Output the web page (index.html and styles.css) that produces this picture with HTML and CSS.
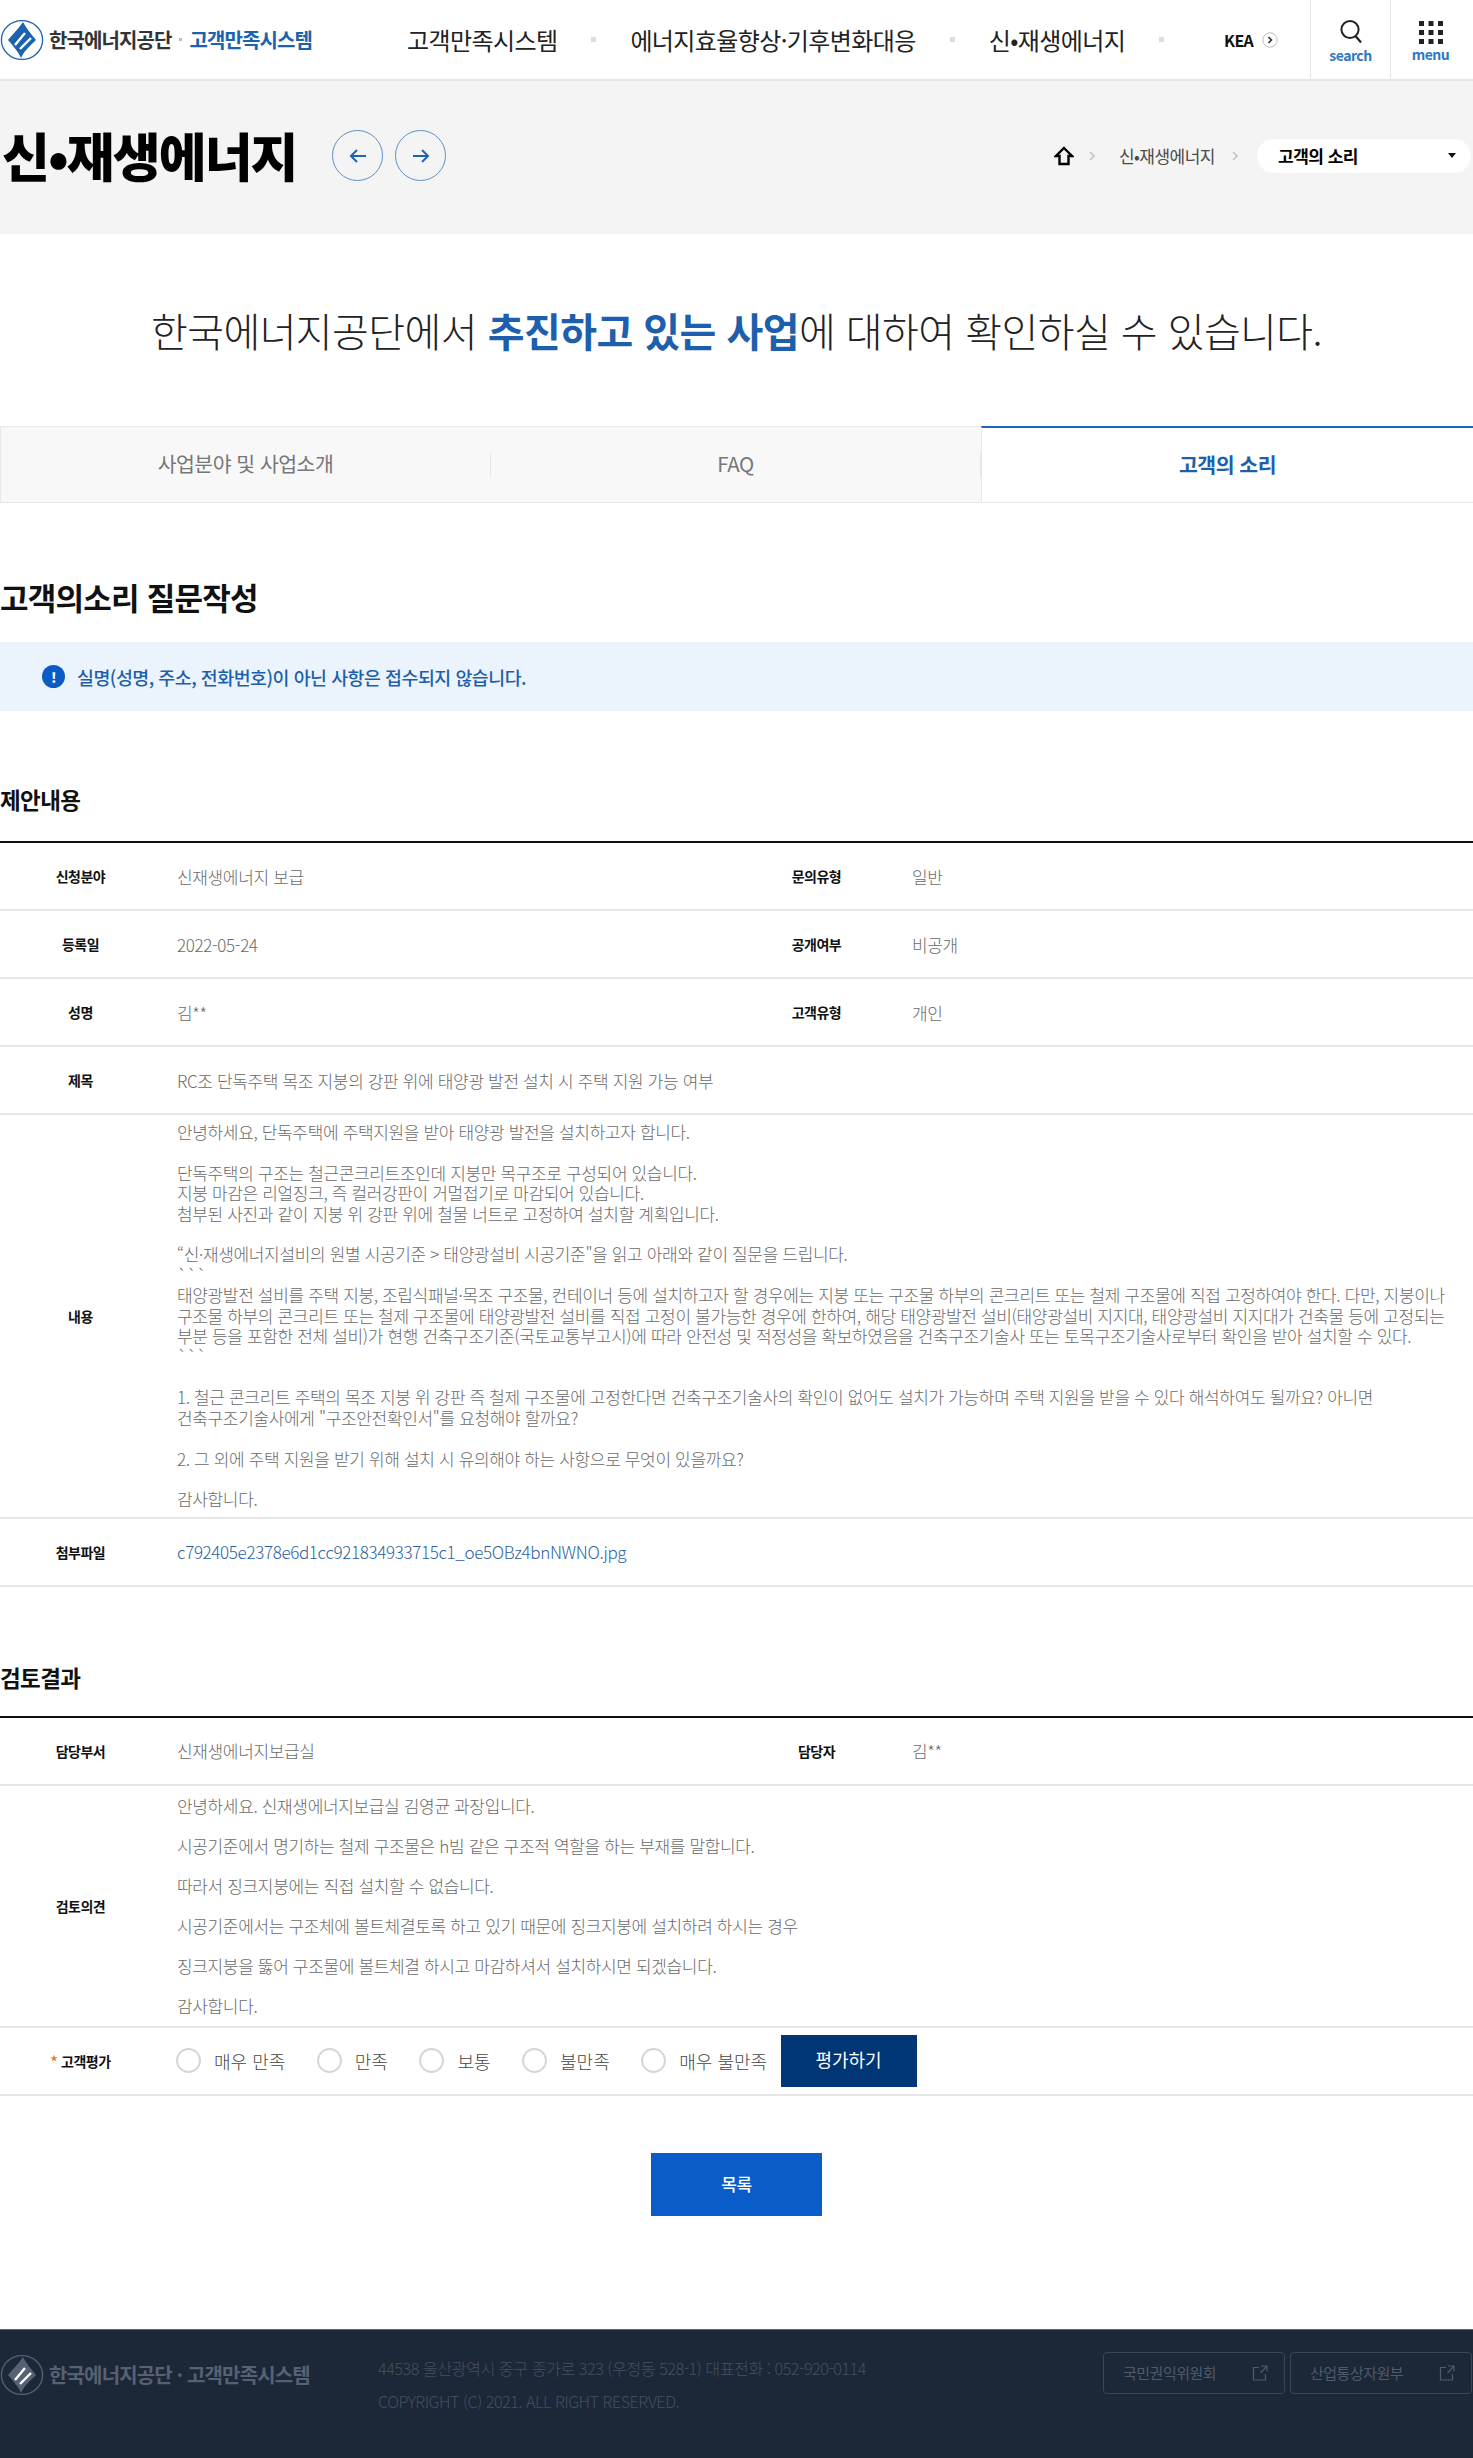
FILE: index.html
```html
<!DOCTYPE html>
<html lang="ko">
<head>
<meta charset="utf-8">
<title>고객의 소리</title>
<link rel="stylesheet" href="styles.css">
</head>
<body>
<svg class="defs" width="0" height="0" aria-hidden="true">
  <symbol id="mark" viewBox="0 0 44 42">
    <ellipse cx="22" cy="21" rx="20.6" ry="19.4" fill="none" stroke="currentColor" stroke-width="1.3"/>
    <path d="M23 3 C26 9 31 15 36 21 C30 27 24 32 21 39 C18 32 13 27 8 21 C13 15 19 9 23 3 Z" fill="currentColor"/>
    <path d="M15 26 L25 14 M20 30 L31 19" fill="none" stroke="#fff" stroke-width="2.4" class="mark-lines"/>
  </symbol>
</svg>
<header class="top">
  <a class="logo">
    <svg class="logo-mark" width="44" height="42"><use href="#mark"/></svg>
    <span class="logo-a">한국에너지공단</span><i class="logo-dot"></i><span class="logo-b">고객만족시스템</span>
  </a>
  <nav class="gnb">
    <a>고객만족시스템</a><i></i>
    <a>에너지효율향상·기후변화대응</a><i></i>
    <a>신•재생에너지</a><i></i>
  </nav>
  <a class="kea">KEA
    <svg width="16" height="16" viewBox="0 0 16 16"><circle cx="8" cy="8" r="7.2" fill="none" stroke="#bbb"/><path d="M6.5 5 L9.5 8 L6.5 11" fill="none" stroke="#222" stroke-width="1.5"/></svg>
  </a>
  <a class="tool">
    <svg width="24" height="26" viewBox="0 0 24 26"><circle cx="11" cy="10.5" r="8.6" fill="none" stroke="#222" stroke-width="2"/><path d="M16.5 17 L22 23.5" stroke="#222" stroke-width="2.2"/></svg>
    <span>search</span>
  </a>
  <a class="tool">
    <svg width="24" height="24" viewBox="0 0 24 24" fill="#222"><rect x="0" y="1" width="5" height="5"/><rect x="9.5" y="1" width="5" height="5"/><rect x="19" y="1" width="5" height="5"/><rect x="0" y="10" width="5" height="5"/><rect x="9.5" y="10" width="5" height="5"/><rect x="19" y="10" width="5" height="5"/><rect x="0" y="19" width="5" height="5"/><rect x="9.5" y="19" width="5" height="5"/><rect x="19" y="19" width="5" height="5"/></svg>
    <span>menu</span>
  </a>
</header>

<section class="band">
  <h1>신•재생에너지</h1>
  <a class="circle"><svg width="18" height="16" viewBox="0 0 18 16"><path d="M17 8 H2 M8 2 L2 8 L8 14" fill="none" stroke="#1d64b8" stroke-width="2"/></svg></a>
  <a class="circle"><svg width="18" height="16" viewBox="0 0 18 16"><path d="M1 8 H16 M10 2 L16 8 L10 14" fill="none" stroke="#1d64b8" stroke-width="2"/></svg></a>
  <div class="crumbs">
    <svg class="home" width="20" height="20" viewBox="0 0 20 20"><path d="M10 2 L18 10 H14.5 V18 H5.5 V10 H2 Z" fill="none" stroke="#000" stroke-width="2.4"/></svg>
    <svg class="sep" width="6" height="10" viewBox="0 0 6 10"><path d="M1 1 L5 5 L1 9" fill="none" stroke="#c4c4c4" stroke-width="1.6"/></svg>
    <span>신•재생에너지</span>
    <svg class="sep" width="6" height="10" viewBox="0 0 6 10"><path d="M1 1 L5 5 L1 9" fill="none" stroke="#c4c4c4" stroke-width="1.6"/></svg>
    <div class="select"><span>고객의 소리</span><i></i></div>
  </div>
</section>

<p class="slogan">한국에너지공단에서 <strong>추진하고 있는 사업</strong>에 대하여 확인하실 수 있습니다.</p>

<div class="tabs">
  <a class="tab">사업분야 및 사업소개</a>
  <a class="tab">FAQ</a>
  <a class="tab on">고객의 소리</a>
</div>

<main>
  <h2>고객의소리 질문작성</h2>
  <div class="notice">
    <span class="bang">!</span>
    <span>실명(성명, 주소, 전화번호)이 아닌 사항은 접수되지 않습니다.</span>
  </div>

  <h3 class="first">제안내용</h3>
  <div class="board">
    <div class="row"><div class="th">신청분야</div><div class="td">신재생에너지 보급</div><div class="th">문의유형</div><div class="td">일반</div></div>
    <div class="row"><div class="th">등록일</div><div class="td">2022-05-24</div><div class="th">공개여부</div><div class="td">비공개</div></div>
    <div class="row"><div class="th">성명</div><div class="td">김**</div><div class="th">고객유형</div><div class="td">개인</div></div>
    <div class="row wide"><div class="th">제목</div><div class="td">RC조 단독주택 목조 지붕의 강판 위에 태양광 발전 설치 시 주택 지원 가능 여부</div></div>
    <div class="row wide"><div class="th">내용</div><div class="td body">안녕하세요, 단독주택에 주택지원을 받아 태양광 발전을 설치하고자 합니다.<br><br>단독주택의 구조는 철근콘크리트조인데 지붕만 목구조로 구성되어 있습니다.<br>지붕 마감은 리얼징크, 즉 컬러강판이 거멀접기로 마감되어 있습니다.<br>첨부된 사진과 같이 지붕 위 강판 위에 철물 너트로 고정하여 설치할 계획입니다.<br><br>“신·재생에너지설비의 원별 시공기준 &gt; 태양광설비 시공기준"을 읽고 아래와 같이 질문을 드립니다.<br>```<br>태양광발전 설비를 주택 지붕, 조립식패널·목조 구조물, 컨테이너 등에 설치하고자 할 경우에는 지붕 또는 구조물 하부의 콘크리트 또는 철제 구조물에 직접 고정하여야 한다. 다만, 지붕이나<br>구조물 하부의 콘크리트 또는 철제 구조물에 태양광발전 설비를 직접 고정이 불가능한 경우에 한하여, 해당 태양광발전 설비(태양광설비 지지대, 태양광설비 지지대가 건축물 등에 고정되는<br>부분 등을 포함한 전체 설비)가 현행 건축구조기준(국토교통부고시)에 따라 안전성 및 적정성을 확보하였음을 건축구조기술사 또는 토목구조기술사로부터 확인을 받아 설치할 수 있다.<br>```<br><br>1. 철근 콘크리트 주택의 목조 지붕 위 강판 즉 철제 구조물에 고정한다면 건축구조기술사의 확인이 없어도 설치가 가능하며 주택 지원을 받을 수 있다 해석하여도 될까요? 아니면<br>건축구조기술사에게 "구조안전확인서"를 요청해야 할까요?<br><br>2. 그 외에 주택 지원을 받기 위해 설치 시 유의해야 하는 사항으로 무엇이 있을까요?<br><br>감사합니다.</div></div>
    <div class="row wide"><div class="th">첨부파일</div><div class="td"><a class="file">c792405e2378e6d1cc921834933715c1_oe5OBz4bnNWNO.jpg</a></div></div>
  </div>

  <h3>검토결과</h3>
  <div class="board">
    <div class="row"><div class="th">담당부서</div><div class="td">신재생에너지보급실</div><div class="th">담당자</div><div class="td">김**</div></div>
    <div class="row wide"><div class="th">검토의견</div><div class="td review">안녕하세요. 신재생에너지보급실 김영균 과장입니다.<br>시공기준에서 명기하는 철제 구조물은 h빔 같은 구조적 역할을 하는 부재를 말합니다.<br>따라서 징크지붕에는 직접 설치할 수 없습니다.<br>시공기준에서는 구조체에 볼트체결토록 하고 있기 때문에 징크지붕에 설치하려 하시는 경우<br>징크지붕을 뚫어 구조물에 볼트체결 하시고 마감하셔서 설치하시면 되겠습니다.<br>감사합니다.</div></div>
    <div class="row wide"><div class="th"><em>*</em> 고객평가</div><div class="td rating">
      <label class="radio"><i></i>매우 만족</label>
      <label class="radio"><i></i>만족</label>
      <label class="radio"><i></i>보통</label>
      <label class="radio"><i></i>불만족</label>
      <label class="radio"><i></i>매우 불만족</label>
      <a class="rate-btn">평가하기</a>
    </div></div>
  </div>

  <div class="actions"><a class="list-btn">목록</a></div>
</main>

<footer>
  <a class="logo foot-logo">
    <svg class="logo-mark" width="44" height="42"><use href="#mark"/></svg>
    <span class="foot-name">한국에너지공단 · 고객만족시스템</span>
  </a>
  <div class="addr">
    <p>44538 울산광역시 중구 종가로 323 (우정동 528-1) 대표전화 : 052-920-0114</p>
    <p>COPYRIGHT (C) 2021. ALL RIGHT RESERVED.</p>
  </div>
  <div class="links">
    <a>국민권익위원회<svg width="16" height="16" viewBox="0 0 16 16"><path d="M7 2.5 H1.5 V15 H13.5 V9 M9 1 H15 V6.5 M15 1 L8.5 8" fill="none" stroke="#4f5a6b" stroke-width="1.2"/></svg></a>
    <a>산업통상자원부<svg width="16" height="16" viewBox="0 0 16 16"><path d="M7 2.5 H1.5 V15 H13.5 V9 M9 1 H15 V6.5 M15 1 L8.5 8" fill="none" stroke="#4f5a6b" stroke-width="1.2"/></svg></a>
  </div>
</footer>
</body>
</html>
```
FILE: styles.css
```css
* { box-sizing: border-box; }
html, body { margin: 0; padding: 0; }
body {
  width: 1473px;
  font-family: "Noto Sans CJK KR", "Noto Sans", sans-serif;
  color: #111;
  background: #fff;
  letter-spacing: -0.5px;
}
.defs { position: absolute; }
a { color: inherit; text-decoration: none; }
i, em { font-style: normal; }

/* header */
.top {
  height: 81px;
  display: flex;
  align-items: center;
  border-bottom: 2px solid #e6e6e6;
  padding-right: 2px;
}
.logo { display: flex; align-items: center; width: 407px; flex: none; }
.logo-mark { color: #1b63ad; margin-left: 0; flex: none; }
.logo-a { margin-left: 5px; font-size: 20px; font-weight: 700; color: #333; letter-spacing: -0.9px; }
.logo-b { font-size: 20px; font-weight: 700; color: #1b63ad; letter-spacing: -0.9px; }
.logo-dot { width: 3px; height: 3px; margin: 0 8px 0 7px; background: #bbb; }
.gnb { display: flex; align-items: center; width: 817px; flex: none; }
.gnb a { font-size: 24px; font-weight: 400; letter-spacing: -0.6px; color: #222; }
.gnb i { width: 5px; height: 5px; background: #ddd; margin: 0 34px; }
.kea { display: flex; align-items: center; gap: 9px; width: 86px; flex: none; font-size: 16px; font-weight: 700; letter-spacing: -0.6px; }
.tool {
  width: 80px;
  height: 79px;
  flex: none;
  border-left: 1px solid #e6e6e6;
  display: flex;
  flex-direction: column;
  align-items: center;
  justify-content: center;
  gap: 1px;
  padding-top: 4px;
}
.tool span { font-size: 14px; font-weight: 700; line-height: 18px; color: #2f77c4; letter-spacing: -0.5px; }

/* band */
.band {
  height: 153px;
  background: #f4f4f4;
  display: flex;
  align-items: center;
  padding-bottom: 4px;
}
h1 { margin: 0 40px 0 2px; font-size: 52px; line-height: 1.2; font-weight: 900; color: #000; letter-spacing: -1.9px; width: 290px; white-space: nowrap; }
.circle {
  width: 51px;
  height: 51px;
  margin-right: 12px;
  border: 1.5px solid #5e8fcb;
  border-radius: 50%;
  display: flex;
  align-items: center;
  justify-content: center;
}
.crumbs { margin-left: auto; display: flex; align-items: center; font-size: 17px; color: #4a4a4a; }
.crumbs .home { margin-right: 15px; }
.crumbs span { margin: 0 17px 0 24px; }
.select {
  width: 214px;
  height: 34px;
  margin-left: 19px;
  margin-right: 2px;
  background: #fff;
  border-radius: 17px;
  display: flex;
  align-items: center;
  justify-content: space-between;
  padding: 0 15px 0 21px;
}
.crumbs .select span { margin: 0; font-size: 17px; font-weight: 700; color: #000; }
.select i { border: 4px solid transparent; border-top: 5px solid #111; border-bottom: 0; }

/* slogan */
.slogan { margin: 0; height: 192px; display: flex; align-items: center; justify-content: center; gap: 0; font-size: 40px; font-weight: 300; color: #222; letter-spacing: -0.56px; white-space: pre-wrap; }
.slogan strong { font-weight: 700; color: #1d5fad; }

/* tabs */
.tabs { display: grid; grid-template-columns: 490px 491px 492px; height: 77px; }
.tab {
  display: flex;
  align-items: center;
  justify-content: center;
  background: #f8f8f8;
  border-top: 1px solid #e8e8e8;
  border-bottom: 1px solid #e8e8e8;
  font-size: 20.5px;
  color: #777;
  position: relative;
  padding-bottom: 3px;
}
.tab:first-child { border-left: 1px solid #e8e8e8; }
.tab:nth-child(2)::before {
  content: "";
  position: absolute;
  left: 0;
  top: 26px;
  height: 24px;
  width: 1px;
  background: #e6e6e6;
}
.tab:nth-child(2)::after {
  content: "";
  position: absolute;
  right: 0;
  top: 26px;
  height: 24px;
  width: 1px;
  background: #e6e6e6;
}
.tab.on { background: #fff; border-top: 2px solid #1d64b8; color: #1d5fad; font-weight: 700; border-left: 1px solid #e8e8e8; padding-top: 1px; }

/* main */
h2 { margin: 0; padding-top: 69px; height: 139px; font-size: 31px; line-height: 50px; font-weight: 700; color: #111; letter-spacing: -0.75px; }
.notice {
  margin-top: 0;
  height: 69px;
  background: #ebf4fd;
  display: flex;
  align-items: center;
  gap: 12px;
  padding-left: 42px;
  font-size: 18.4px;
  font-weight: 500;
  color: #1d5fad;
}
.bang {
  width: 23px;
  height: 23px;
  background: #0a5cc4;
  border-radius: 50%;
  color: #fff;
  font-size: 14px;
  font-weight: 900;
  display: flex;
  align-items: center;
  justify-content: center;
}
h3 { margin: 0; height: 129px; padding-top: 72px; font-size: 22.5px; line-height: 36px; font-weight: 700; color: #111; letter-spacing: -0.6px; }
h3.first { height: 130px; padding-top: 70px; }
.board { border-top: 2px solid #111; }
.row {
  display: grid;
  grid-template-columns: 161px 592px 127px 1fr;
  min-height: 68px;
  border-bottom: 2px solid #e6e6e6;
}
.row.wide { grid-template-columns: 161px 1fr; }
.th {
  display: flex;
  align-items: center;
  justify-content: center;
  gap: 4px;
  font-size: 14px;
  font-weight: 700;
  color: #111;
}
.th em { color: #e8792c; }
.td {
  display: flex;
  align-items: center;
  padding-left: 16px;
  font-size: 17px;
  font-weight: 300;
  color: #6a6a6a;
  letter-spacing: -0.35px;
}
.td:nth-child(4) { padding-left: 32px; }
.td.body, .td.review { display: block; }
.td.body { padding-top: 7px; padding-bottom: 7px; line-height: 20.4px; white-space: nowrap; }
.td.review { line-height: 40px; }
.file { color: #2c5f9e; font-weight: 300; }
.rating { gap: 31.5px; padding-left: 15px; }
.radio { display: flex; align-items: center; gap: 13px; font-size: 18px; font-weight: 300; color: #444; letter-spacing: 0; }
.radio i { width: 25px; height: 25px; border: 2px solid #d6d6d6; border-radius: 50%; }
.rate-btn {
  width: 136px;
  height: 52px;
  margin-left: -18px;
  background: #003675;
  color: #fff;
  font-size: 18px;
  font-weight: 400;
  display: flex;
  align-items: center;
  justify-content: center;
  letter-spacing: 0;
  padding-bottom: 3px;
}
.actions { display: flex; justify-content: center; padding: 57px 0 113px; }
.list-btn {
  width: 171px;
  height: 63px;
  background: #0a5dc9;
  color: #fff;
  font-size: 17px;
  font-weight: 500;
  display: flex;
  align-items: center;
  justify-content: center;
  padding-bottom: 2px;
}

/* footer */
footer {
  height: 131px;
  background: #1c2737;
  display: flex;
  align-items: flex-start;
  padding-top: 24px;
  border-top: 1px solid #5b6472;
}
.foot-logo { width: 378px; color: #566273; }
.foot-logo .logo-mark { color: #566273; }
.foot-logo .mark-lines { stroke: #1c2737; }
.foot-name { margin-left: 5px; font-size: 20px; font-weight: 700; color: #566273; letter-spacing: -0.85px; white-space: nowrap; }
.addr { flex: 1; font-size: 16.2px; font-weight: 300; color: #454f5f; line-height: 33px; margin-top: -2px; }
.addr p { margin: 0; }
.links { display: flex; gap: 5px; margin-right: 1px; margin-top: -2px; }
.links a {
  width: 182px;
  height: 42px;
  border: 1px solid #3a4556;
  border-radius: 4px;
  display: flex;
  align-items: center;
  justify-content: space-between;
  padding: 0 16px 0 19px;
  font-size: 15px;
  color: #4f5a6b;
}
```
